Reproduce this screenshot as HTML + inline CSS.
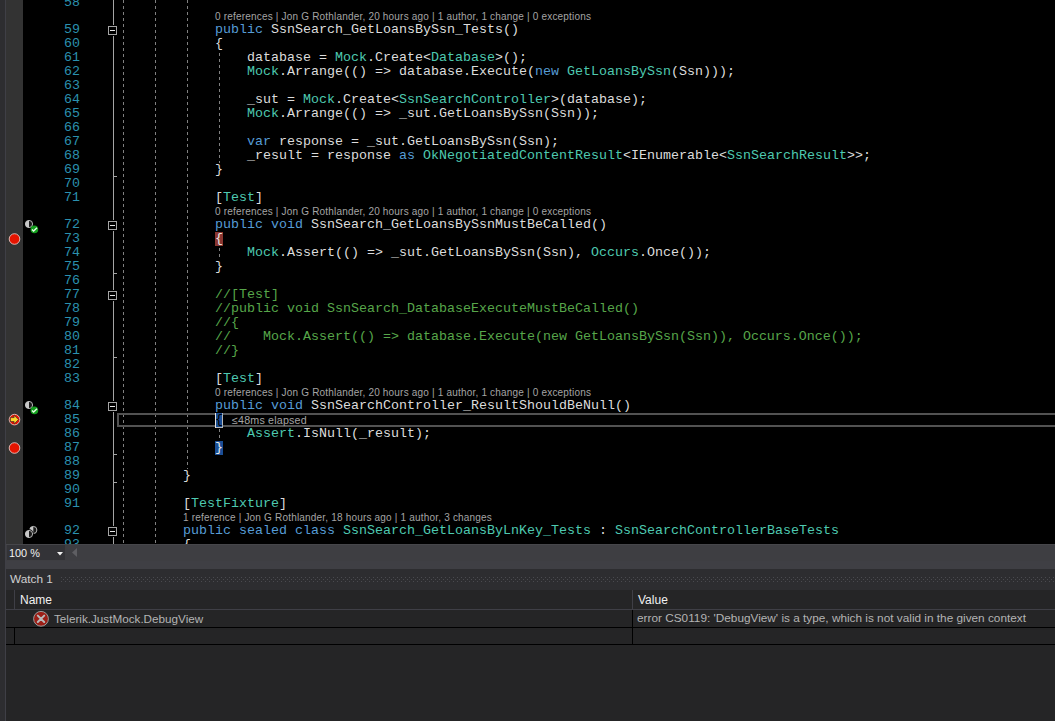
<!DOCTYPE html>
<html><head><meta charset="utf-8">
<style>
*{margin:0;padding:0;box-sizing:border-box}
html,body{width:1055px;height:721px;overflow:hidden;background:#2d2d30}
body{position:relative}
.a{position:absolute}
#ed{left:0;top:0;width:1055px;height:544px;overflow:hidden}
.ln{position:absolute;width:80px;left:0;text-align:right;font-family:"Liberation Mono",monospace;font-size:13.33px;line-height:14px;height:14px;color:#2b91af;white-space:pre}
.cd{position:absolute;white-space:pre;font-family:"Liberation Mono",monospace;font-size:13.33px;line-height:14px;height:14px;color:#dcdcdc}
.lens{position:absolute;white-space:pre;font-family:"Liberation Sans",sans-serif;font-size:10px;letter-spacing:0.19px;line-height:13px;height:13px;color:#a4a4a4}
.k{color:#569cd6}.t{color:#4ec9b0}.c{color:#57a64a}
.bpb{background:#8a3630;color:#e8e8e8;display:inline-block;height:14px;vertical-align:top}
.bmb{background:#1a4e96;color:#e8e8e8;display:inline-block;height:14px;vertical-align:top}
.bmc{background:#1a4e96;color:#000;display:inline-block;height:15px;vertical-align:top;box-shadow:inset 1px 0 0 #e0e0e0,inset -1px -1px 0 #b8b8b8}
.g{position:absolute;width:1px;background:repeating-linear-gradient(to bottom,#808080 0,#808080 3px,transparent 3px,transparent 6px)}
.fl{position:absolute;background:#a5a5a5}
.fb{position:absolute;width:9px;height:9px;border:1px solid #a5a5a5;background:#000;box-shadow:0 -1px 0 #000,0 1px 0 #000}
.fb:after{content:"";position:absolute;left:1px;top:3px;width:5px;height:1px;background:#e6e6e6}
.ui{font-family:"Liberation Sans",sans-serif}
</style></head><body>
<div class="a" style="left:5px;top:0;width:1px;height:721px;background:#3f3f46"></div>
<div id="ed" class="a">
<div class="a" style="left:6px;top:0;width:17px;height:544px;background:#333333"></div>
<div class="a" style="left:23px;top:0;width:1032px;height:544px;background:#000"></div>

<div class="g" style="left:123px;top:0px;height:544px;background-position:0 0px"></div>
<div class="g" style="left:155px;top:0px;height:544px;background-position:0 0px"></div>
<div class="g" style="left:187px;top:0px;height:469px;background-position:0 0px"></div>
<div class="g" style="left:219px;top:53px;height:110px"></div>
<div class="g" style="left:219px;top:248px;height:12px"></div>
<div class="g" style="left:219px;top:429px;height:12px"></div>
<div class="fl" style="left:113px;top:0;width:1px;height:544px"></div>
<div class="fl" style="left:113px;top:176px;width:4px;height:1px"></div>
<div class="fl" style="left:113px;top:273px;width:4px;height:1px"></div>
<div class="fl" style="left:113px;top:357px;width:4px;height:1px"></div>
<div class="fl" style="left:113px;top:454px;width:4px;height:1px"></div>
<div class="fl" style="left:113px;top:482px;width:4px;height:1px"></div>
<div class="fb" style="left:108px;top:26px"></div>
<div class="fb" style="left:108px;top:221px"></div>
<div class="fb" style="left:108px;top:291px"></div>
<div class="fb" style="left:108px;top:402px"></div>
<div class="fb" style="left:108px;top:527px"></div>
<div class="a" style="left:117px;top:413px;width:940px;height:14px;border:2px solid #525252;border-right:none"></div>
<div class="ln" style="top:-4px">58</div>
<div class="ln" style="top:23px">59</div>
<div class="cd" style="left:215px;top:23px"><span class="k">public</span> SsnSearch_GetLoansBySsn_Tests()</div>
<div class="lens" style="left:215px;top:10px">0 references | Jon G Rothlander, 20 hours ago | 1 author, 1 change | 0 exceptions</div>
<div class="ln" style="top:37px">60</div>
<div class="cd" style="left:215px;top:37px">{</div>
<div class="ln" style="top:51px">61</div>
<div class="cd" style="left:215px;top:51px">    database = <span class="t">Mock</span>.Create&lt;<span class="t">Database</span>&gt;();</div>
<div class="ln" style="top:65px">62</div>
<div class="cd" style="left:215px;top:65px">    <span class="t">Mock</span>.Arrange(() =&gt; database.Execute(<span class="k">new</span> <span class="t">GetLoansBySsn</span>(Ssn)));</div>
<div class="ln" style="top:79px">63</div>
<div class="ln" style="top:93px">64</div>
<div class="cd" style="left:215px;top:93px">    _sut = <span class="t">Mock</span>.Create&lt;<span class="t">SsnSearchController</span>&gt;(database);</div>
<div class="ln" style="top:107px">65</div>
<div class="cd" style="left:215px;top:107px">    <span class="t">Mock</span>.Arrange(() =&gt; _sut.GetLoansBySsn(Ssn));</div>
<div class="ln" style="top:121px">66</div>
<div class="ln" style="top:135px">67</div>
<div class="cd" style="left:215px;top:135px">    <span class="k">var</span> response = _sut.GetLoansBySsn(Ssn);</div>
<div class="ln" style="top:149px">68</div>
<div class="cd" style="left:215px;top:149px">    _result = response <span class="k">as</span> <span class="t">OkNegotiatedContentResult</span>&lt;IEnumerable&lt;<span class="t">SsnSearchResult</span>&gt;&gt;;</div>
<div class="ln" style="top:163px">69</div>
<div class="cd" style="left:215px;top:163px">}</div>
<div class="ln" style="top:177px">70</div>
<div class="ln" style="top:191px">71</div>
<div class="cd" style="left:215px;top:191px">[<span class="t">Test</span>]</div>
<div class="ln" style="top:218px">72</div>
<div class="cd" style="left:215px;top:218px"><span class="k">public</span> <span class="k">void</span> SsnSearch_GetLoansBySsnMustBeCalled()</div>
<div class="lens" style="left:215px;top:205px">0 references | Jon G Rothlander, 20 hours ago | 1 author, 1 change | 0 exceptions</div>
<div class="ln" style="top:232px">73</div>
<div class="cd" style="left:215px;top:232px"><span class="bpb">{</span></div>
<div class="ln" style="top:246px">74</div>
<div class="cd" style="left:215px;top:246px">    <span class="t">Mock</span>.Assert(() =&gt; _sut.GetLoansBySsn(Ssn), <span class="t">Occurs</span>.Once());</div>
<div class="ln" style="top:260px">75</div>
<div class="cd" style="left:215px;top:260px">}</div>
<div class="ln" style="top:274px">76</div>
<div class="ln" style="top:288px">77</div>
<div class="cd" style="left:215px;top:288px"><span class="c">//[Test]</span></div>
<div class="ln" style="top:302px">78</div>
<div class="cd" style="left:215px;top:302px"><span class="c">//public void SsnSearch_DatabaseExecuteMustBeCalled()</span></div>
<div class="ln" style="top:316px">79</div>
<div class="cd" style="left:215px;top:316px"><span class="c">//{</span></div>
<div class="ln" style="top:330px">80</div>
<div class="cd" style="left:215px;top:330px"><span class="c">//    Mock.Assert(() =&gt; database.Execute(new GetLoansBySsn(Ssn)), Occurs.Once());</span></div>
<div class="ln" style="top:344px">81</div>
<div class="cd" style="left:215px;top:344px"><span class="c">//}</span></div>
<div class="ln" style="top:358px">82</div>
<div class="ln" style="top:372px">83</div>
<div class="cd" style="left:215px;top:372px">[<span class="t">Test</span>]</div>
<div class="ln" style="top:399px">84</div>
<div class="cd" style="left:215px;top:399px"><span class="k">public</span> <span class="k">void</span> SsnSearchController_ResultShouldBeNull()</div>
<div class="lens" style="left:215px;top:386px">0 references | Jon G Rothlander, 20 hours ago | 1 author, 1 change | 0 exceptions</div>
<div class="ln" style="top:413px">85</div>
<div class="cd" style="left:215px;top:413px"><span class="bmc">{</span></div>
<div class="ln" style="top:427px">86</div>
<div class="cd" style="left:215px;top:427px">    <span class="t">Assert</span>.IsNull(_result);</div>
<div class="ln" style="top:441px">87</div>
<div class="cd" style="left:215px;top:441px"><span class="bmb">}</span></div>
<div class="ln" style="top:455px">88</div>
<div class="ln" style="top:469px">89</div>
<div class="cd" style="left:183px;top:469px">}</div>
<div class="ln" style="top:483px">90</div>
<div class="ln" style="top:497px">91</div>
<div class="cd" style="left:183px;top:497px">[<span class="t">TestFixture</span>]</div>
<div class="ln" style="top:524px">92</div>
<div class="cd" style="left:183px;top:524px"><span class="k">public</span> <span class="k">sealed</span> <span class="k">class</span> <span class="t">SsnSearch_GetLoansByLnKey_Tests</span> : <span class="t">SsnSearchControllerBaseTests</span></div>
<div class="lens" style="left:183px;top:511px">1 reference | Jon G Rothlander, 18 hours ago | 1 author, 3 changes</div>
<div class="ln" style="top:538px">93</div>
<div class="cd" style="left:183px;top:538px">{</div>
<div class="lens" style="left:232px;top:413px;line-height:14px;font-size:10.7px">&le;48ms elapsed</div>
<svg class="a" style="left:0;top:0" width="60" height="544" viewBox="0 0 60 544">
<defs>
<g id="half"><circle cx="0" cy="0" r="3.6" fill="#1a1a1a" stroke="#c8c8c8" stroke-width="0.9"/><path d="M0,-3.6 A3.6,3.6 0 0 0 0,3.6 Z" fill="#c8c8c8"/></g>
<g id="chk"><circle cx="0" cy="0" r="3.8" fill="#14a01e"/><path d="M-2.4,0.1 L-0.8,1.7 L2.6,-1.7" fill="none" stroke="#e8ffe8" stroke-width="1.4"/></g>
</defs>

<use href="#half" x="29" y="224"/><use href="#chk" x="34.4" y="229.4"/>
<use href="#half" x="29" y="405"/><use href="#chk" x="34.4" y="410.4"/>
<circle cx="14.5" cy="239" r="5.3" fill="#e51400" stroke="#f2d6d2" stroke-width="0.8"/>
<circle cx="14.5" cy="448" r="5.3" fill="#e51400" stroke="#f2d6d2" stroke-width="0.8"/>
<circle cx="14.5" cy="419.6" r="5.3" fill="#e51400" stroke="#f2d6d2" stroke-width="0.8"/>
<path d="M10.4,417.6 h3.7 v-2.4 l4.3,4.4 l-4.3,4.4 v-2.4 h-3.7 z" fill="#fcd72a" stroke="#3c2a30" stroke-width="0.7"/>
<use href="#half" x="33.3" y="530"/><circle cx="29" cy="534" r="4.7" fill="#000"/><use href="#half" x="29" y="534"/>
</svg>
</div>
<div class="a" style="left:6px;top:544px;width:1049px;height:1px;background:#46464a"></div>
<div class="a" style="left:6px;top:545px;width:1049px;height:16px;background:#3e3e42"></div>
<div class="a" style="left:6px;top:561px;width:1049px;height:8px;background:#3f3f44"></div>
<div class="a" style="left:7px;top:545px;width:58px;height:15px;background:#333337"></div>
<div class="a ui" style="left:9px;top:547px;font-size:10.9px;line-height:13px;color:#f1f1f1">100 %</div>
<svg class="a" style="left:0;top:540px" width="90" height="30"><path d="M57,12 h6 l-3,3.5 z" fill="#f1f1f1"/><path d="M77,8 v9 l-5,-4.5 z" fill="#5e5e62"/></svg>
<div class="a" style="left:6px;top:569px;width:1049px;height:21px;background:#2d2d30"></div>
<div class="a ui" style="left:10px;top:572px;font-size:11.8px;line-height:15px;color:#d0d0d0">Watch 1</div>
<svg class="a" style="left:61px;top:577px" width="994" height="5"><defs><pattern id="dots" width="4" height="4" patternUnits="userSpaceOnUse"><rect x="0" y="0" width="1" height="1" fill="#4a4a4f"/><rect x="2" y="2" width="1" height="1" fill="#4a4a4f"/></pattern></defs><rect width="994" height="5" fill="url(#dots)"/></svg>
<div class="a" style="left:6px;top:590px;width:1049px;height:131px;background:#252526"></div>
<div class="a" style="left:14px;top:590px;width:1px;height:19px;background:#3f3f46"></div>
<div class="a" style="left:632px;top:590px;width:1px;height:19px;background:#3f3f46"></div>
<div class="a" style="left:6px;top:609px;width:1049px;height:1px;background:#3f3f46"></div>
<div class="a ui" style="left:20px;top:593px;font-size:12px;line-height:15px;color:#f1f1f1">Name</div>
<div class="a ui" style="left:638px;top:593px;font-size:12px;line-height:15px;color:#f1f1f1">Value</div>
<div class="a" style="left:6px;top:627px;width:1049px;height:1px;background:#000"></div>
<div class="a" style="left:14px;top:627px;width:1px;height:17px;background:#000"></div>
<div class="a" style="left:632px;top:610px;width:1px;height:34px;background:#000"></div>
<div class="a" style="left:6px;top:644px;width:1049px;height:1px;background:#000"></div>
<svg class="a" style="left:30px;top:608px" width="22" height="22"><circle cx="11" cy="10.8" r="7.4" fill="#9c1e16" stroke="#9a9a9a" stroke-width="1"/><path d="M7.8,7.6 L14.2,14 M14.2,7.6 L7.8,14" stroke="#b8b8b8" stroke-width="2" stroke-linecap="round"/></svg>
<div class="a ui" style="left:54px;top:611px;font-size:11.7px;line-height:15px;color:#b4b4b4">Telerik.JustMock.DebugView</div>
<div class="a ui" style="left:637px;top:611px;font-size:11.8px;line-height:15px;color:#b4b4b4">error CS0119: 'DebugView' is a type, which is not valid in the given context</div>

</body></html>
